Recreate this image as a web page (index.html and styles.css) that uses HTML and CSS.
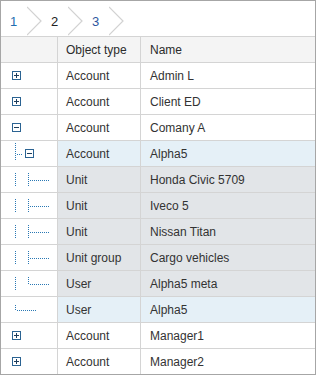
FILE: index.html
```html
<!DOCTYPE html>
<html>
<head>
<meta charset="utf-8">
<link rel="stylesheet" href="styles.css">
</head>
<body>
<div class="widget">
  <div class="crumbs">
    <span class="crumb link">1</span>
    <svg class="chev" width="24" height="35" viewBox="0 0 24 35"><polyline points="0,6 14,20 0,34" fill="none" stroke="#d2d2d2" stroke-width="1.2"/></svg>
    <span class="crumb">2</span>
    <svg class="chev" width="24" height="35" viewBox="0 0 24 35"><polyline points="0,6 14,20 0,34" fill="none" stroke="#d2d2d2" stroke-width="1.2"/></svg>
    <span class="crumb link2">3</span>
    <svg class="chev" width="24" height="35" viewBox="0 0 24 35"><polyline points="0,6 14,20 0,34" fill="none" stroke="#d2d2d2" stroke-width="1.2"/></svg>
  </div>
  <div class="grid">
    <div class="row head">
      <div class="cell tree"></div>
      <div class="cell">Object type</div>
      <div class="cell">Name</div>
    </div>

    <div class="row">
      <div class="cell tree"><svg width="57" height="25" shape-rendering="crispEdges"><rect x="11.5" y="8.5" width="8" height="8" fill="#fff" stroke="#2b6392"/><path d="M13 12.5h5M15.5 10v5" stroke="#1d3d5c"/></svg></div>
      <div class="cell">Account</div>
      <div class="cell">Admin L</div>
    </div>
    <div class="row">
      <div class="cell tree"><svg width="57" height="25" shape-rendering="crispEdges"><rect x="11.5" y="8.5" width="8" height="8" fill="#fff" stroke="#2b6392"/><path d="M13 12.5h5M15.5 10v5" stroke="#1d3d5c"/></svg></div>
      <div class="cell">Account</div>
      <div class="cell">Client ED</div>
    </div>
    <div class="row">
      <div class="cell tree"><svg width="57" height="25" shape-rendering="crispEdges"><rect x="11.5" y="8.5" width="8" height="8" fill="#fff" stroke="#2b6392"/><path d="M13 12.5h5" stroke="#1d3d5c"/></svg></div>
      <div class="cell">Account</div>
      <div class="cell">Comany A</div>
    </div>
    <div class="row sel">
      <div class="cell tree"><svg width="57" height="25" shape-rendering="crispEdges"><path d="M14.5 2v18M16 13.5h6" stroke="#2a78b4" stroke-dasharray="1 1"/><rect x="24.5" y="8.5" width="8" height="8" fill="#fff" stroke="#2b6392"/><path d="M26 12.5h5" stroke="#1d3d5c"/></svg></div>
      <div class="cell">Account</div>
      <div class="cell">Alpha5</div>
    </div>
    <div class="row sub">
      <div class="cell tree"><svg width="57" height="25" shape-rendering="crispEdges"><path d="M14.5 6v14M27.5 6v14M29 13.5h19" stroke="#2a78b4" stroke-dasharray="1 1"/></svg></div>
      <div class="cell">Unit</div>
      <div class="cell">Honda Civic 5709</div>
    </div>
    <div class="row sub">
      <div class="cell tree"><svg width="57" height="25" shape-rendering="crispEdges"><path d="M14.5 6v14M27.5 6v14M29 13.5h19" stroke="#2a78b4" stroke-dasharray="1 1"/></svg></div>
      <div class="cell">Unit</div>
      <div class="cell">Iveco 5</div>
    </div>
    <div class="row sub">
      <div class="cell tree"><svg width="57" height="25" shape-rendering="crispEdges"><path d="M14.5 6v14M27.5 6v14M29 13.5h19" stroke="#2a78b4" stroke-dasharray="1 1"/></svg></div>
      <div class="cell">Unit</div>
      <div class="cell">Nissan Titan</div>
    </div>
    <div class="row sub">
      <div class="cell tree"><svg width="57" height="25" shape-rendering="crispEdges"><path d="M14.5 6v14M27.5 6v14M29 13.5h19" stroke="#2a78b4" stroke-dasharray="1 1"/></svg></div>
      <div class="cell">Unit group</div>
      <div class="cell">Cargo vehicles</div>
    </div>
    <div class="row sub">
      <div class="cell tree"><svg width="57" height="25" shape-rendering="crispEdges"><path d="M14.5 6v14M27.5 6v8M29 13.5h19" stroke="#2a78b4" stroke-dasharray="1 1"/></svg></div>
      <div class="cell">User</div>
      <div class="cell">Alpha5 meta</div>
    </div>
    <div class="row sel">
      <div class="cell tree"><svg width="57" height="25" shape-rendering="crispEdges"><path d="M14.5 8v6M16 13.5h19" stroke="#2a78b4" stroke-dasharray="1 1"/></svg></div>
      <div class="cell">User</div>
      <div class="cell">Alpha5</div>
    </div>
    <div class="row">
      <div class="cell tree"><svg width="57" height="25" shape-rendering="crispEdges"><rect x="11.5" y="8.5" width="8" height="8" fill="#fff" stroke="#2b6392"/><path d="M13 12.5h5M15.5 10v5" stroke="#1d3d5c"/></svg></div>
      <div class="cell">Account</div>
      <div class="cell">Manager1</div>
    </div>
    <div class="row">
      <div class="cell tree"><svg width="57" height="25" shape-rendering="crispEdges"><rect x="11.5" y="8.5" width="8" height="8" fill="#fff" stroke="#2b6392"/><path d="M13 12.5h5M15.5 10v5" stroke="#1d3d5c"/></svg></div>
      <div class="cell">Account</div>
      <div class="cell">Manager2</div>
    </div>
  </div>
</div>
</body>
</html>
```

FILE: styles.css
```css
html, body {
  margin: 0;
  padding: 0;
  background: #fff;
}
.widget {
  width: 316px;
  height: 375px;
  box-sizing: border-box;
  border: 1px solid #a6a6a6;
  font-family: "Liberation Sans", Arial, sans-serif;
  font-size: 12px;
  color: #333;
  overflow: hidden;
}
.crumbs {
  height: 35px;
  display: flex;
  align-items: flex-start;
  padding-left: 9px;
}
.crumb {
  width: 17px;
  line-height: 14px;
  margin-top: 14px;
  font-size: 13px;
  color: #222;
}
.crumb.link { color: #1f6eb0; }
.crumb.link2 { color: #2f56a0; }
.chev {
  display: block;
  flex: none;
}
.row {
  display: grid;
  grid-template-columns: 57px 83px 1fr;
  height: 26px;
  box-sizing: border-box;
  border-top: 1px solid #d4d4d4;
}
.cell {
  display: flex;
  align-items: center;
  box-sizing: border-box;
  border-right: 1px solid #d4d4d4;
  padding-left: 8px;
  white-space: nowrap;
  overflow: hidden;
}
.cell:last-child {
  border-right: none;
  padding-left: 9px;
}
.cell.tree {
  padding-left: 0;
}
.cell.tree svg {
  display: block;
}
.head {
  background: #f4f4f4;
}
.head .cell {
  color: #2b2b2b;
}
.sel .cell:not(.tree) {
  background: #e5f0f7;
}
.sub .cell:not(.tree) {
  background: #e2e5e8;
}
```
